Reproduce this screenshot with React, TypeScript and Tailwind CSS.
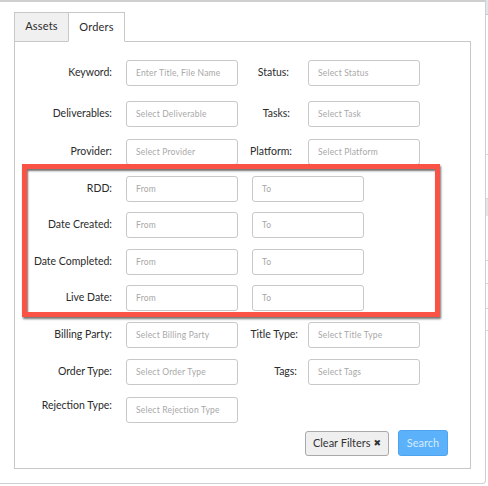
import React from 'react';

type Field = { label: string; placeholder: string; pad?: string };

interface FilterRow {
  gap: string;
  left: Field;
  right?: Field;
  range?: boolean;
  lift?: boolean;
}

const rows: FilterRow[] = [
  { gap: 'mt-0', left: { label: 'Keyword:', placeholder: 'Enter Title, File Name' }, right: { label: 'Status:', placeholder: 'Select Status', pad: 'pr-[9px]' } },
  { gap: 'mt-[15px]', left: { label: 'Deliverables:', placeholder: 'Select Deliverable' }, right: { label: 'Tasks:', placeholder: 'Select Task', pad: 'pr-[8px]' } },
  { gap: 'mt-[12px]', left: { label: 'Provider:', placeholder: 'Select Provider' }, right: { label: 'Platform:', placeholder: 'Select Platform', pad: 'pr-[6px]' } },
  { gap: 'mt-[11px]', left: { label: 'RDD:', placeholder: 'From' }, range: true },
  { gap: 'mt-[10px]', left: { label: 'Date Created:', placeholder: 'From' }, range: true },
  { gap: 'mt-[11px]', left: { label: 'Date Completed:', placeholder: 'From' }, range: true },
  { gap: 'mt-[10px]', left: { label: 'Live Date:', placeholder: 'From' }, range: true },
  { gap: 'mt-[11px]', left: { label: 'Billing Party:', placeholder: 'Select Billing Party' }, right: { label: 'Title Type:', placeholder: 'Select Title Type', pad: 'pr-0' } },
  { gap: 'mt-[11px]', left: { label: 'Order Type:', placeholder: 'Select Order Type' }, right: { label: 'Tags:', placeholder: 'Select Tags', pad: 'pr-[1px]' } },
  { gap: 'mt-[12px]', left: { label: 'Rejection Type:', placeholder: 'Select Rejection Type' }, lift: true },
];

function TextBox({ placeholder, className = '' }: { placeholder: string; className?: string }) {
  return (
    <input
      readOnly
      placeholder={placeholder}
      className={`h-[26px] w-[112px] rounded-[3px] border border-[#c8c8c8] bg-white pl-[9px] text-[8.5px] tracking-[0.2px] outline-none placeholder:text-[#a8a8a8] ${className}`}
    />
  );
}

export default function App() {
  return (
    <div className="flex h-[486px] w-[488px] overflow-hidden bg-white text-[#2b2b2b]" style={{ fontFamily: 'Lato, "Liberation Sans", sans-serif' }}>
      {/* filter dialog */}
      <div className="-ml-px h-[484px] w-[487px] shrink-0 rounded-br-[4px] border border-t-2 border-[#cfcfcf] bg-white pl-[14px] pt-[10px]">
        <div className="relative z-10 -mb-px flex">
          <div className="flex h-[30px] w-[55px] items-center justify-center border border-[#c8c8c8] bg-[#f0f0f0] pb-[2px] text-[11px] tracking-[0.2px]">
            Assets
          </div>
          <div className="-ml-px flex h-[30px] w-[57px] items-center justify-center border border-b-white border-[#c8c8c8] bg-white text-[11px] tracking-[0.2px]">
            Orders
          </div>
        </div>

        <div className="relative h-[428px] w-[457px] border border-[#c8c8c8] pt-[18px]">
          {rows.map((row, i) => (
            <div key={i} className={`flex items-center ${row.gap}`}>
              <div className={`w-[97px] text-right text-[10.5px] ${row.lift ? 'mb-[8px]' : ''}`}>{row.left.label}</div>
              <TextBox placeholder={row.left.placeholder} className="ml-[14px]" />
              {row.range && <TextBox placeholder="To" className="ml-[14px]" />}
              {row.right && (
                <>
                  <div className={`w-[60px] text-right text-[10.5px] ${row.right.pad}`}>{row.right.label}</div>
                  <TextBox placeholder={row.right.placeholder} className="ml-[10px]" />
                </>
              )}
            </div>
          ))}

          <div className="mt-[8px] flex justify-end gap-[9px] pr-[22px]">
            <button className="flex h-[25px] w-[84px] items-center justify-center gap-[3px] rounded-[3px] border border-[#a9a9a9] bg-[#efefef] text-[11px] text-[#333]">
              Clear Filters
              <span className="text-[9px]" style={{ fontFamily: '"DejaVu Sans", sans-serif' }}>✖</span>
            </button>
            <button className="-mt-px h-[26px] w-[50px] rounded-[3px] border border-[#4ea4ee] bg-[#5cb2fa] text-[11px] text-[#d6ebff]">
              Search
            </button>
          </div>

          {/* highlight annotation */}
          <div className="pointer-events-none absolute left-[7px] top-[122px] h-[153px] w-[418px] border-[5px] border-[#fb5246] shadow-[1px_2px_2px_rgba(0,0,0,0.55),inset_1px_2px_2px_rgba(0,0,0,0.55)]" />
        </div>
      </div>

      {/* page behind the dialog */}
      <div className="flex flex-1 flex-col">
        <div className="h-[15px] border-b border-[#c8c8c8] bg-[#dfe6ee]" />
        <div className="h-[140px] border-b border-[#d8d8d8]" />
        <div className="h-[44px] border-b border-[#d8d8d8]" />
        <div className="h-[17px] bg-[#e6e6e6]" />
        <div className="h-[45px] border-b border-[#d8d8d8]" />
        <div className="h-[23px] border-b border-[#d8d8d8]" />
        <div className="h-[25px] border-b border-[#d8d8d8]" />
        <div className="h-[22px] border-b border-[#d8d8d8]" />
      </div>
    </div>
  );
}
